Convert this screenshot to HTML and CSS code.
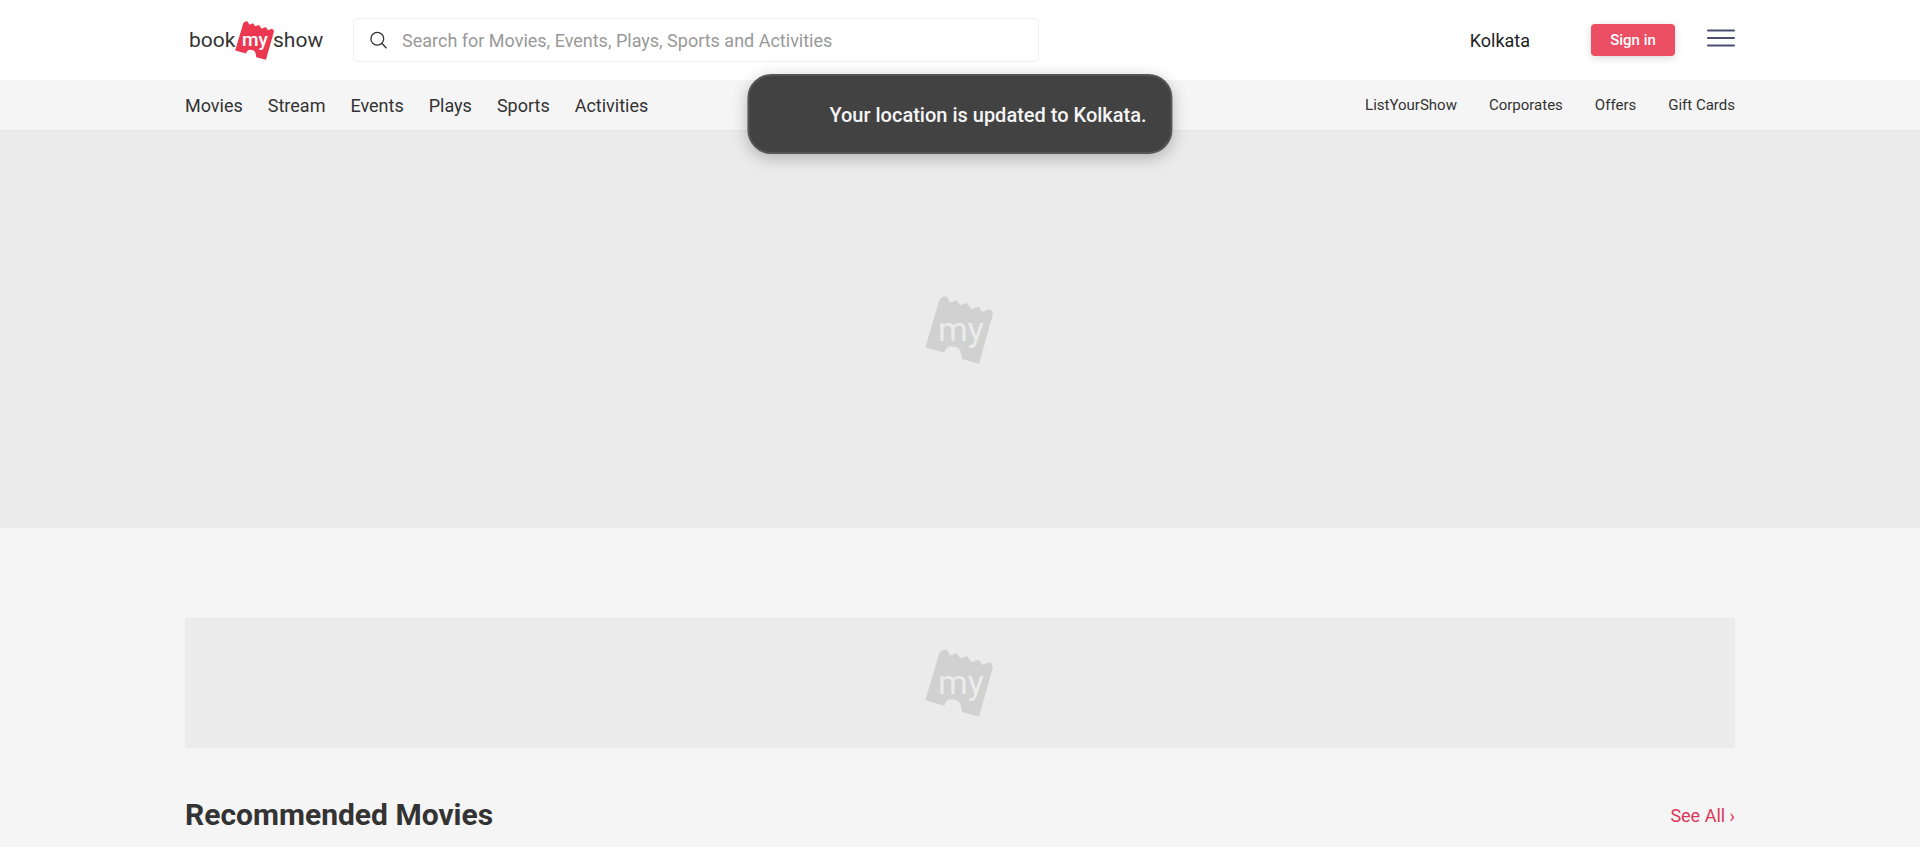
FILE: index.html
```
<!DOCTYPE html>
<html lang="en">
<head>
<meta charset="utf-8">
<meta name="viewport" content="width=device-width, initial-scale=1">
<title>BookMyShow - Kolkata</title>
<link rel="stylesheet" href="styles.css">
</head>
<body>
<svg class="defs" width="0" height="0" aria-hidden="true">
  <symbol id="ticket" viewBox="0 0 204 204">
    <path d="M1 154 L42 16 Q44 7 52 4 Q62 -1 67 4 L75 20 L94 12 L106 28 L126 21 L139 40 L161 32 L173 48 L192 40 Q205 45 203 57 L162 203 L111 189 Q110 176 107 168 Q102 153 90 152 Q73 149 68 154 Q60 159 58 170 Z"/>
  </symbol>
</svg>
<header class="header">
  <div class="container header-row">
    <a class="logo" href="#" aria-label="BookMyShow home">
      <svg width="140" height="42" viewBox="0 0 140 42">
        <use class="logo-ticket" href="#ticket" x="50" y="2" width="39" height="39"/>
        <text class="logo-word" x="4" y="28">book</text>
        <text class="logo-my" x="57" y="27">my</text>
        <text class="logo-word" x="88" y="28">show</text>
      </svg>
    </a>
    <label class="search">
      <svg width="18" height="18" viewBox="0 0 18 18" fill="none" stroke="#333" stroke-width="1.3" aria-hidden="true"><circle cx="7.3" cy="7.8" r="6.4"/><path d="M11.8 12.3 L16.5 17.2"/></svg>
      <input class="search-input" type="search" aria-label="Search" placeholder="Search for Movies, Events, Plays, Sports and Activities">
    </label>
    <button class="city" type="button">Kolkata</button>
    <button class="sign-in" type="button">Sign in</button>
    <button class="menu" type="button" aria-label="Open menu">
      <svg width="28" height="18" viewBox="0 0 28 18" stroke="#4a4c70" stroke-width="2" stroke-linecap="round"><path d="M1 1.5H27M1 9H27M1 16.5H27"/></svg>
    </button>
  </div>
</header>
<nav class="nav">
  <div class="container nav-row">
    <div class="nav-main">
      <a href="#">Movies</a><a href="#">Stream</a><a href="#">Events</a><a href="#">Plays</a><a href="#">Sports</a><a href="#">Activities</a>
    </div>
    <div class="nav-side">
      <a href="#">ListYourShow</a><a href="#">Corporates</a><a href="#">Offers</a><a href="#">Gift Cards</a>
    </div>
  </div>
</nav>
<main>
  <div class="placeholder hero">
    <svg width="70" height="68" viewBox="0 0 70 68" aria-hidden="true"><use class="ph-ticket" href="#ticket" width="68" height="68"/><text class="ph-my" x="13" y="45">my</text></svg>
  </div>
  <div class="container">
    <div class="placeholder banner">
      <svg width="70" height="68" viewBox="0 0 70 68" aria-hidden="true"><use class="ph-ticket" href="#ticket" width="68" height="68"/><text class="ph-my" x="13" y="45">my</text></svg>
    </div>
    <div class="section-head">
      <h2>Recommended Movies</h2>
      <a href="#">See All ›</a>
    </div>
  </div>
</main>
<div class="toast" role="status">Your location is updated to Kolkata.</div>
</body>
</html>
```
FILE: styles.css
```
* { box-sizing: border-box; }
body {
  margin: 0;
  background: #f5f5f5;
  color: #333;
  font-family: Roboto, "Liberation Sans", sans-serif;
  font-size: 18px;
}
a { color: inherit; text-decoration: none; }
button { border: 0; padding: 0; background: none; font: inherit; color: inherit; cursor: pointer; }
svg { display: block; }
.defs { position: absolute; }
.container { width: calc(100% - 48px); max-width: 1550px; margin: 0 auto; }

.header { background: #fff; }
.header-row { display: flex; align-items: center; height: 80px; }
.logo { margin-right: 28px; }
.logo-word { font-size: 21px; fill: #333; }
.logo-ticket { fill: #eb3850; }
.logo-my { font-size: 19px; font-weight: 500; fill: #fff; }

.search {
  display: flex;
  align-items: center;
  gap: 14px;
  flex: 0 1 686px;
  height: 44px;
  padding: 0 16px;
  border: 1px solid #eee;
  border-radius: 4px;
  margin-right: auto;
}
.search svg { flex: none; }
.search-input {
  flex: 1;
  min-width: 0;
  padding: 0;
  border: 0;
  outline: 0;
  background: none;
  font: inherit;
  color: #333;
}
.search-input::placeholder { color: #999; opacity: 1; }
.city { color: #222; margin-right: 61px; }
.sign-in {
  width: 84px;
  height: 32px;
  border-radius: 4px;
  background: #ec4e64;
  color: #fff;
  font-size: 15px;
  font-weight: 500;
  box-shadow: 0 2px 8px rgba(0, 0, 0, 0.15);
}
.menu { margin: 0 0 4px 32px; }

.nav { border-bottom: 1px solid #e4e4e4; }
.nav-row { display: flex; justify-content: space-between; align-items: center; height: 50px; }
.nav-main, .nav-side { display: flex; }
.nav-main { gap: 25px; }
.nav-side { gap: 32px; font-size: 15px; }

.placeholder { display: flex; align-items: center; justify-content: center; background: #ebebeb; }
.ph-ticket { fill: #d1d1d1; }
.ph-my { font-size: 34px; fill: #ebebeb; }
.hero { height: 397px; }
.banner { height: 130px; margin-top: 90px; }
.section-head { display: flex; align-items: center; justify-content: space-between; padding: 47px 0 12px; }
.section-head h2 { margin: 0; font-size: 30px; line-height: 40px; font-weight: 700; }
.section-head a { color: #dc3558; }

.toast {
  position: absolute;
  top: 74px;
  left: 50%;
  transform: translateX(-50%);
  padding: 25px 24px 23px 80px;
  border: 2px solid #555;
  border-radius: 24px;
  background: #424242;
  color: #f5f5f5;
  font-size: 20px;
  line-height: 28px;
  font-weight: 500;
  white-space: nowrap;
  box-shadow: 0 4px 16px rgba(0, 0, 0, 0.25);
}
```
